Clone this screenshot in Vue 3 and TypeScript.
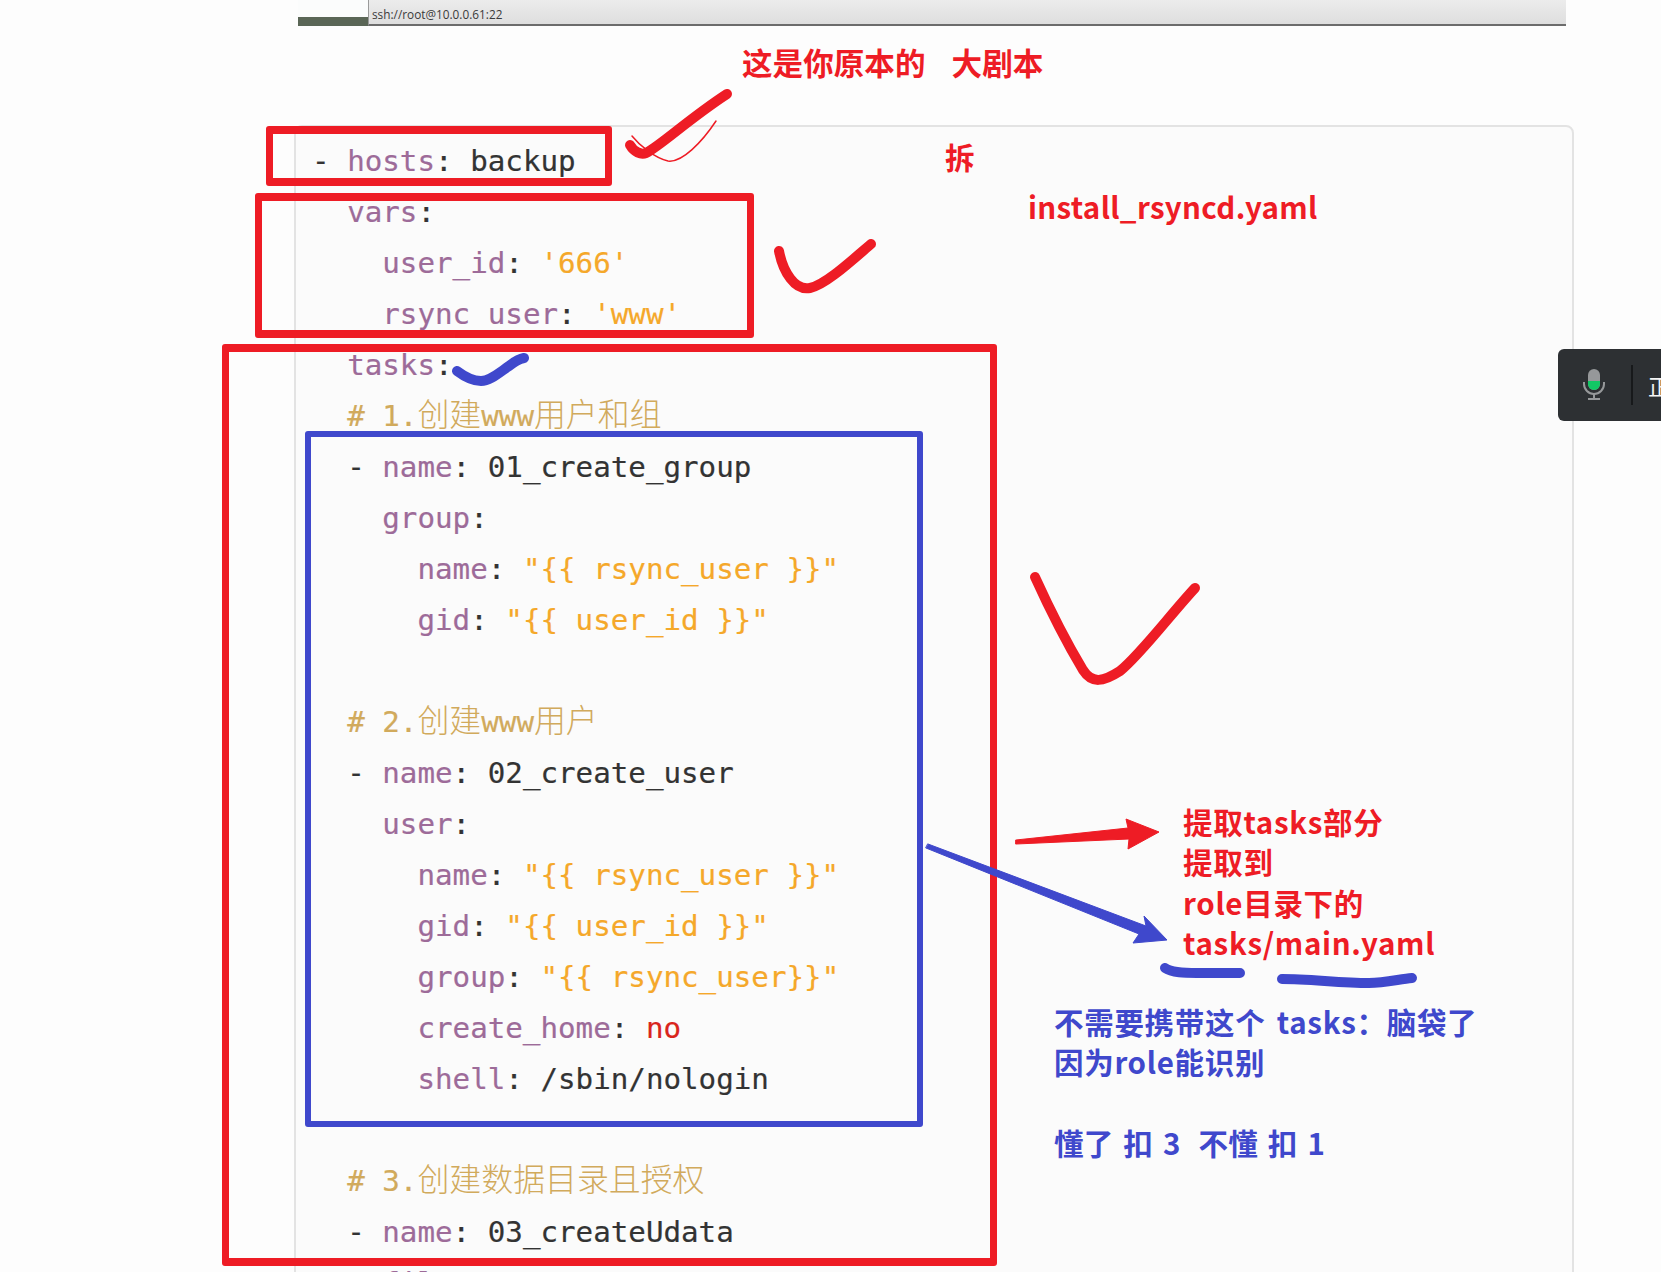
<script setup lang="ts">
type Token = [string, string]

const key = (s: string): Token => ['k', s]
const p = (s: string): Token => ['p', s]
const str = (s: string): Token => ['s', s]
const c = (s: string): Token => ['c', s]
const cj = (s: string): Token => ['c cj', s]

const lines: Token[][] = [
  [p('- '), key('hosts'), p(': backup')],
  [p('  '), key('vars'), p(':')],
  [p('    '), key('user_id'), p(': '), str("'666'")],
  [p('    '), key('rsync_user'), p(': '), str("'www'")],
  [p('  '), key('tasks'), p(':')],
  [p('  '), c('# 1.'), cj('创建'), c('www'), cj('用户和组')],
  [p('  - '), key('name'), p(': 01_create_group')],
  [p('    '), key('group'), p(':')],
  [p('      '), key('name'), p(': '), str('"{{ rsync_user }}"')],
  [p('      '), key('gid'), p(': '), str('"{{ user_id }}"')],
  [],
  [p('  '), c('# 2.'), cj('创建'), c('www'), cj('用户')],
  [p('  - '), key('name'), p(': 02_create_user')],
  [p('    '), key('user'), p(':')],
  [p('      '), key('name'), p(': '), str('"{{ rsync_user }}"')],
  [p('      '), key('gid'), p(': '), str('"{{ user_id }}"')],
  [p('      '), key('group'), p(': '), str('"{{ rsync_user}}"')],
  [p('      '), key('create_home'), p(': '), ['n', 'no']],
  [p('      '), key('shell'), p(': /sbin/nologin')],
  [],
  [p('  '), c('# 3.'), cj('创建数据目录且授权')],
  [p('  - '), key('name'), p(': 03_createUdata')],
  [p('    '), key('file'), p(':')],
]
</script>

<template>
  <div class="page">
    <header class="term">
      <div class="term-side"></div>
      <div class="term-title">ssh://root@10.0.0.61:22</div>
    </header>

    <section class="code">
      <div v-for="(line, i) in lines" :key="i" class="line">
        <span v-for="(t, j) in line" :key="j" :class="t[0]">{{ t[1] }}</span>
      </div>
    </section>

    <div class="mark box-hosts"></div>
    <div class="mark box-vars"></div>
    <div class="mark box-tasks"></div>
    <div class="mark box-blue"></div>

    <svg class="ink" viewBox="0 0 1661 1272" width="1661" height="1272" fill="none" stroke-linecap="round" stroke-linejoin="round">
      <path d="M632 136 C640 146 655 158 668 161 C682 163 702 142 716 121" stroke="#ee1c25" stroke-width="1.5" />
      <path d="M630 145 C634 152 641 155 646 153 C660 146 690 118 727 94" stroke="#ee1c25" stroke-width="10" />
      <path d="M779 251 C783 272 795 291 810 288 C825 285 850 262 871 244" stroke="#ee1c25" stroke-width="10" />
      <path d="M1035 577 C1050 610 1068 645 1083 670 C1092 684 1103 682 1120 671 C1140 655 1170 615 1195 588" stroke="#ee1c25" stroke-width="10" />
      <path d="M457 371 C465 377 473 381 481 381 C490 381 500 372 509 366 C514 362 519 359 524 358" stroke="#3f48cc" stroke-width="10" />
      <polygon points="1016,840 1128,828 1126,819 1159,832 1128,849 1129,839 1016,844" fill="#ee1c25" stroke="#ee1c25" stroke-width="1" />
      <polygon points="928,844 1146,926 1144,916 1167,940 1133,943 1139,934 926,848" fill="#3f48cc" stroke="#3f48cc" stroke-width="1" />
      <path d="M1165 968 C1172 973 1185 973 1197 973 L1240 973" stroke="#3f48cc" stroke-width="10" />
      <path d="M1282 979 C1310 979 1340 983 1369 983 C1385 983 1400 979 1412 978" stroke="#3f48cc" stroke-width="10" />
    </svg>

    <div class="note red title"><span>这是你原本的</span><span>大剧本</span></div>
    <div class="note red chai">拆</div>
    <div class="note red file">install_rsyncd.yaml</div>
    <div class="note red extract">
      <div>提取tasks部分</div>
      <div>提取到</div>
      <div>role目录下的</div>
      <div>tasks/main.yaml</div>
    </div>
    <div class="note blue remark">
      <div>不需要携带这个 tasks：脑袋了</div>
      <div>因为role能识别</div>
      <div class="blank"></div>
      <div class="ask"><span>懂了 扣 3</span><span>不懂 扣 1</span></div>
    </div>

    <aside class="voice">
      <svg class="mic" viewBox="0 0 24 32" width="24" height="32" fill="none">
        <rect x="6" y="0" width="12" height="21" rx="6" fill="#96989a" />
        <path d="M6 12 H18 V15 A6 6 0 0 1 6 15 Z" fill="#12c765" />
        <path d="M2 13 V15 A10 10 0 0 0 22 15 V13" stroke="#96989a" stroke-width="2" />
        <path d="M12 25 V29 M6 30 H18" stroke="#96989a" stroke-width="2" />
      </svg>
      <i class="sep"></i>
      <span class="voice-text">正</span>
    </aside>
  </div>
</template>

<style>
html, body { margin: 0; background: #fdfdfd; }
</style>

<style scoped>
.page {
  position: relative;
  width: 1661px;
  height: 1272px;
  overflow: hidden;
  background: #fdfdfd;
}
.term {
  display: flex;
  height: 26px;
  margin-left: 298px;
  width: 1268px;
}
.term-side {
  width: 70px;
  box-sizing: border-box;
  background: #fbfcfc;
  border-bottom: 9px solid #5a6656;
}
.term-title {
  flex: 1;
  box-sizing: border-box;
  padding: 7px 0 0 3px;
  background: linear-gradient(#ececec, #dedede);
  border-left: 1px solid #9a9a9a;
  border-bottom: 2px solid #6c6c6c;
  font: 11.8px/15px "Open Sans", sans-serif;
  color: #3a3a3a;
}
.code {
  box-sizing: border-box;
  margin: 99px 0 0 294px;
  width: 1280px;
  height: 1300px;
  padding: 9px 0 0 16px;
  background: #fbfbfb;
  border: 2px solid #e3e3e3;
  border-radius: 8px;
  font-family: "DejaVu Sans Mono", monospace;
  font-size: 29.2px;
  -webkit-text-stroke: 0.2px;
}
.line {
  height: 51px;
  line-height: 51px;
  white-space: pre;
}
.k { color: #9d6b99; }
.p { color: #333333; }
.s { color: #f5a82a; }
.c { color: #d1aa5c; }
.n { color: #d9251d; }
.cj {
  font-family: "Noto Sans CJK SC", sans-serif;
  font-size: 31.9px;
  font-weight: 300;
  line-height: 1;
  -webkit-text-stroke: 0;
}
.mark {
  position: absolute;
  box-sizing: border-box;
  border: 8px solid #ee1c25;
  border-left-width: 7.5px;
  border-right-width: 7.5px;
  border-radius: 3px;
}
.box-hosts { left: 266px; top: 126px; width: 346px; height: 60px; }
.box-vars { left: 255px; top: 193px; width: 499px; height: 145px; }
.box-tasks { left: 222px; top: 344px; width: 775px; height: 922px; }
.box-blue {
  left: 305px;
  top: 431px;
  width: 618px;
  height: 696px;
  border: 6px solid #3f48cc;
}
.ink { position: absolute; left: 0; top: 0; }
.note {
  position: absolute;
  font-family: "Noto Sans CJK SC", sans-serif;
  font-weight: 700;
  font-size: 29.5px;
  line-height: 40.3px;
}
.red { color: #ee1c25; }
.blue { color: #3f48cc; }
.title { left: 742px; top: 42px; display: flex; gap: 26px; font-size: 30.6px; }
.chai { left: 945px; top: 136px; }
.file { left: 1028px; top: 186px; letter-spacing: 0.33px; }
.extract { left: 1183px; top: 801px; letter-spacing: 0.7px; }
.remark { left: 1054px; top: 1001px; letter-spacing: 0.7px; word-spacing: 4px; }
.blank { height: 40.3px; }
.ask { display: flex; gap: 18px; letter-spacing: 0.2px; word-spacing: 3px; }
.voice {
  position: absolute;
  left: 1558px;
  top: 349px;
  width: 103px;
  height: 72px;
  box-sizing: border-box;
  display: flex;
  align-items: center;
  padding-left: 24px;
  background: #2d3033;
  border-radius: 6px 0 0 6px;
  overflow: hidden;
}
.mic { flex: none; }
.sep {
  flex: none;
  width: 2px;
  height: 40px;
  margin-left: 25px;
  background: #17191b;
}
.voice-text {
  margin-left: 15px;
  font: 22px/1 "Noto Sans CJK SC", sans-serif;
  color: #f4f4f4;
  white-space: nowrap;
}
</style>
